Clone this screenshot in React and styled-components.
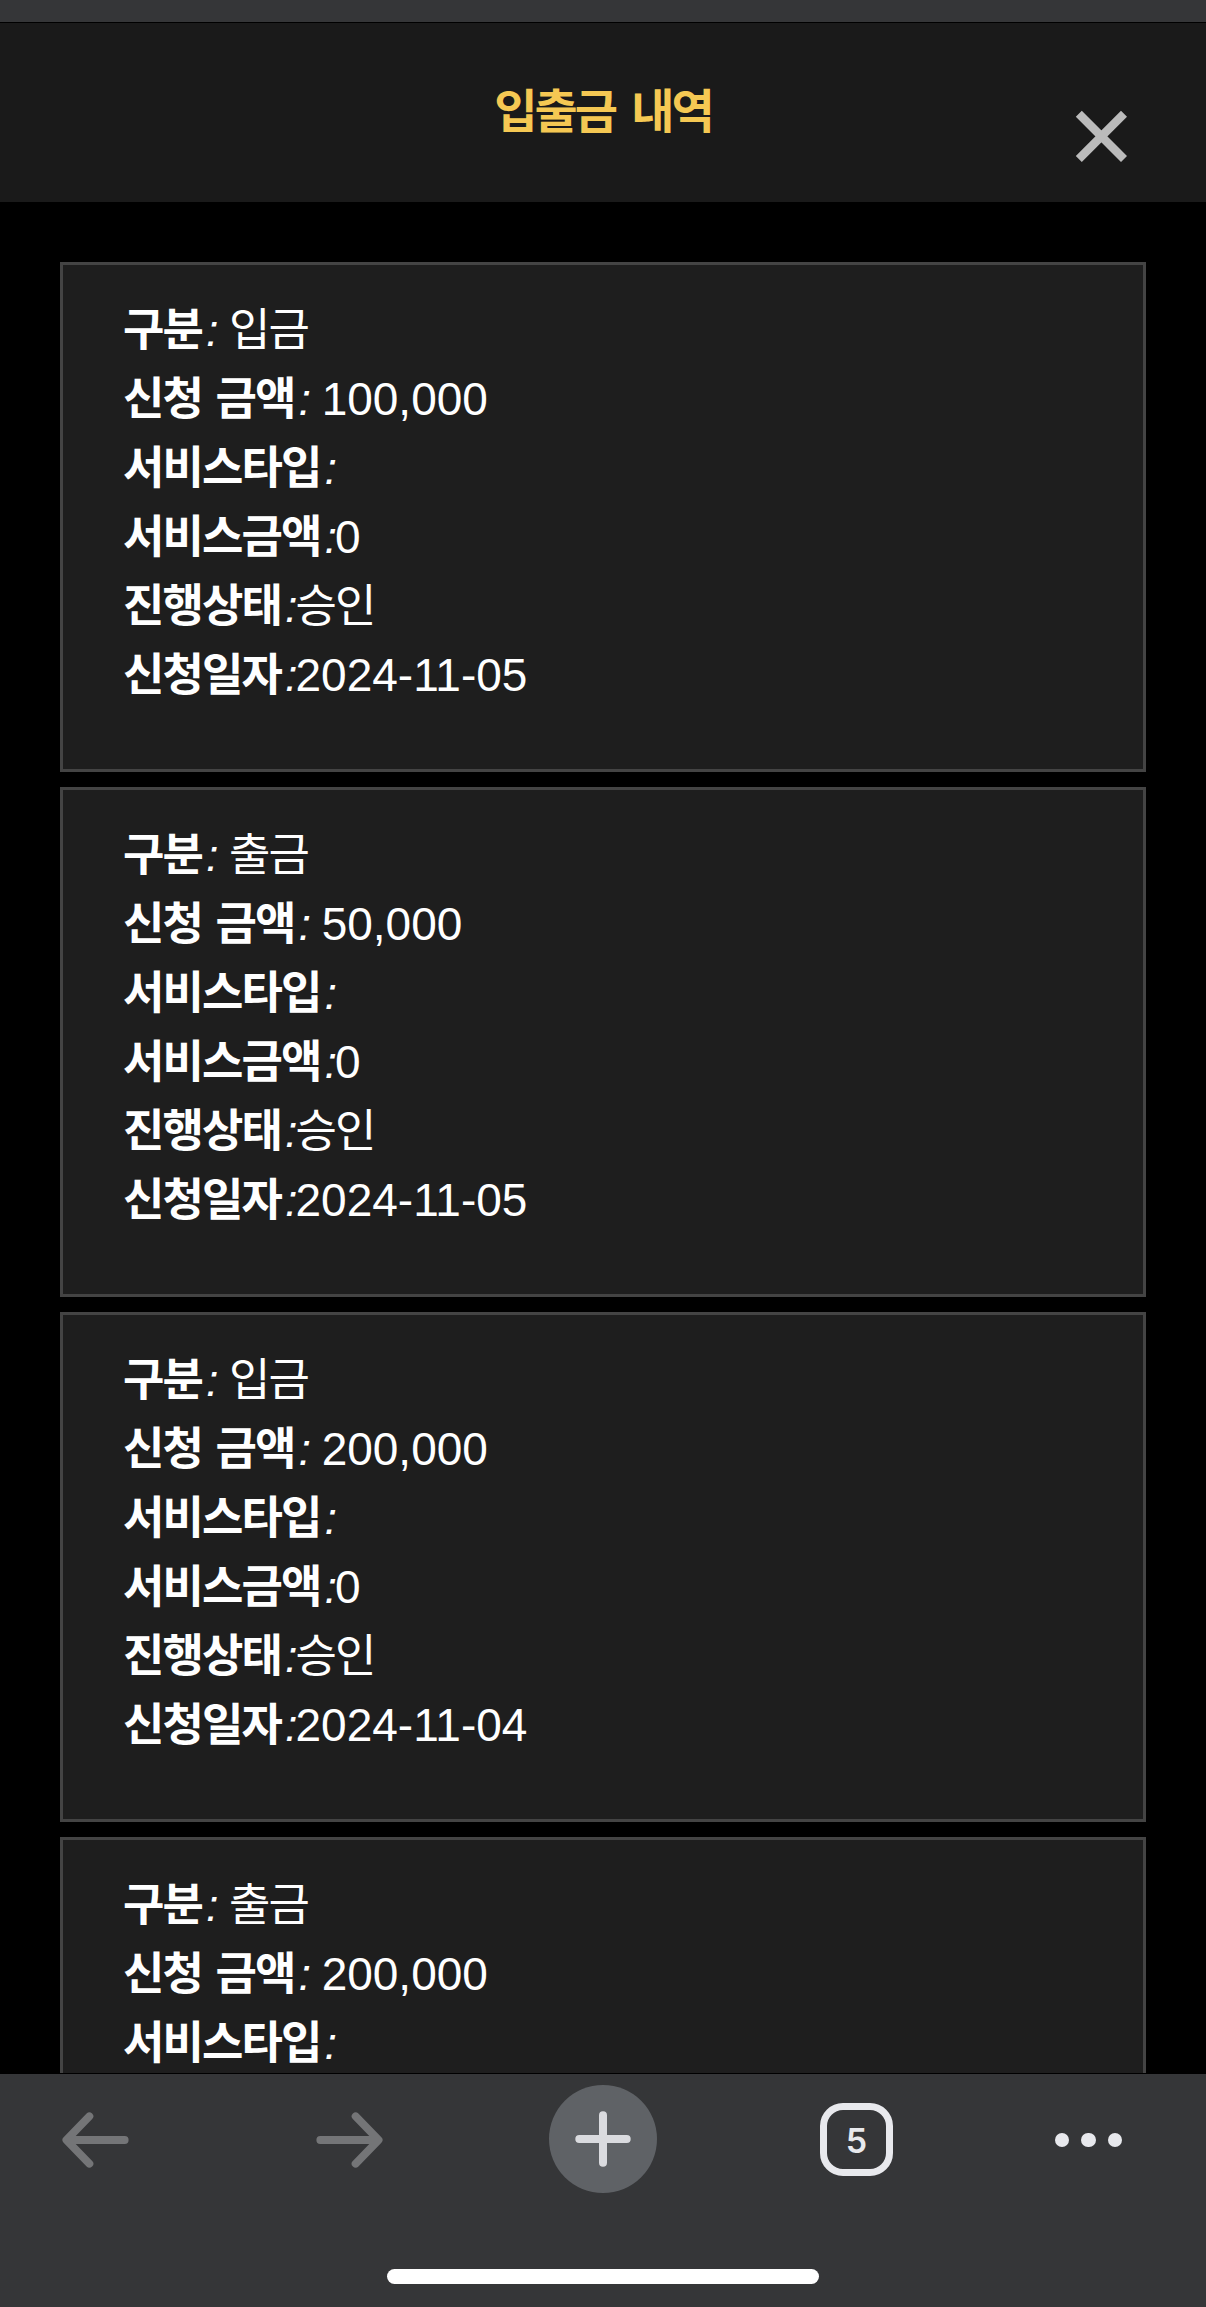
import styled, { createGlobalStyle } from "styled-components";

const records = [
  { id: 1, tipo: "입금", monto: "100,000", servicio: "0", estado: "승인", fecha: "2024-11-05" },
  { id: 2, tipo: "출금", monto: "50,000", servicio: "0", estado: "승인", fecha: "2024-11-05" },
  { id: 3, tipo: "입금", monto: "200,000", servicio: "0", estado: "승인", fecha: "2024-11-04" },
  { id: 4, tipo: "출금", monto: "200,000", servicio: "0", estado: "승인", fecha: "2024-11-04" },
];

export default function App() {
  return (
    <Screen>
      <GlobalStyle />
      <StatusStrip />
      <Header>
        <Title>입출금 내역</Title>
        <CloseBtn aria-label="닫기">
          <svg width="52" height="52" viewBox="0 0 52 52">
            <path d="M3.8 3.8 L49 49 M49 3.8 L3.8 49" stroke="#bbbbbb" strokeWidth="8.5" />
          </svg>
        </CloseBtn>
      </Header>
      <List>
        {records.map((item) => (
          <RecordCard key={item.id} item={item} />
        ))}
      </List>
      <BottomBar />
    </Screen>
  );
}

function RecordCard({ item }) {
  return (
    <Card>
      <Row>
        <Label>구분</Label><Colon>: </Colon><Value>{item.tipo}</Value>
      </Row>
      <Row>
        <Label>신청 금액</Label><Colon>: </Colon><Amount>{item.monto}</Amount>
      </Row>
      <Row>
        <Label>서비스타입</Label><Colon>:</Colon>
      </Row>
      <Row>
        <Label>서비스금액</Label><Colon>:</Colon><Amount>{item.servicio}</Amount>
      </Row>
      <Row>
        <Label>진행상태</Label><Colon>:</Colon><Value>{item.estado}</Value>
      </Row>
      <Row>
        <Label>신청일자</Label><Colon>:</Colon><Amount>{item.fecha}</Amount>
      </Row>
    </Card>
  );
}

function BottomBar() {
  return (
    <Bar>
      <Nav>
        <NavItem aria-label="back">
          <Arrow />
        </NavItem>
        <NavItem aria-label="forward">
          <Arrow $flip />
        </NavItem>
        <NavItem aria-label="new tab">
          <PlusCircle>
            <svg width="56" height="56" viewBox="0 0 56 56">
              <path d="M28 4.3 V51.7 M4.3 28 H51.7" stroke="#dadbdf" strokeWidth="8" strokeLinecap="round" />
            </svg>
          </PlusCircle>
        </NavItem>
        <NavItem aria-label="tabs">
          <TabCount>5</TabCount>
        </NavItem>
        <NavItem aria-label="menu">
          <Dots>
            <Dot />
            <Dot />
            <Dot />
          </Dots>
        </NavItem>
      </Nav>
      <HomeIndicator />
    </Bar>
  );
}

function Arrow({ $flip }) {
  return (
    <ArrowSvg $flip={$flip} width="67" height="56" viewBox="0 0 67 56" fill="none">
      <path
        d="M27.4 4.3 L4.4 28 L27.4 51.7 M5 28 H62.7"
        stroke="#747577"
        strokeWidth="7.8"
        strokeLinecap="round"
        strokeLinejoin="round"
      />
    </ArrowSvg>
  );
}

const GlobalStyle = createGlobalStyle`
  * {
    box-sizing: border-box;
  }
  body {
    margin: 0;
    background: #000;
    font-family: "Liberation Sans", "Noto Sans CJK KR", sans-serif;
  }
  button {
    border: none;
    background: none;
    padding: 0;
    font: inherit;
  }
`;
const Screen = styled.div`
  width: 1206px;
  height: 2307px;
  display: flex;
  flex-direction: column;
  background: #000;
  overflow: hidden;
`;
const StatusStrip = styled.div`
  flex: none;
  height: 23px;
  background: #353638;
  border-bottom: 1px solid #000;
`;
const Header = styled.header`
  flex: none;
  height: 179px;
  display: grid;
  grid-template-columns: 1fr auto 1fr;
  background: #1a1a1a;
`;
const Title = styled.h1`
  grid-column: 2;
  margin: 54px 0 0;
  font-size: 47px;
  line-height: 70px;
  height: 70px;
  font-weight: 700;
  letter-spacing: -3px;
  word-spacing: 6px;
  color: #f5c853;
`;
const CloseBtn = styled.button`
  width: 52px;
  height: 52px;
  justify-self: end;
  margin: 87px 79px 0 0;
  svg {
    display: block;
  }
`;
const List = styled.main`
  flex: 1;
  min-height: 0;
  padding: 60px 60px 0;
  display: flex;
  flex-direction: column;
  gap: 15px;
  overflow-y: auto;
  scrollbar-width: none;
`;
const Card = styled.div`
  flex: none;
  height: 510px;
  padding: 31px 60px 0;
  background: #1e1e1e;
  border: 3px solid #444;
`;
const Row = styled.div`
  height: 69px;
  line-height: 69px;
  font-size: 45px;
  white-space: pre;
  color: #fff;
`;
const Label = styled.b`
  font-weight: 700;
  letter-spacing: -1.9px;
  word-spacing: 3px;
`;
/* the colon sits a little off the label, close to the value */
const Colon = styled.i`
  font-style: italic;
  margin-left: 4px;
  margin-right: -2px;
`;
const Value = styled.span`
  letter-spacing: -2px;
`;
const Amount = styled.span`
  font-size: 46px;
`;
const Bar = styled.footer`
  flex: none;
  height: 234px;
  display: flex;
  flex-direction: column;
  align-items: center;
  background: #353638;
  border-top: 1px solid #000;
`;
const Nav = styled.nav`
  width: 100%;
  height: 132px;
  display: grid;
  grid-template-columns: 190px 319px 188px 319px 145px;
`;
const NavItem = styled.button`
  display: flex;
  align-items: center;
  justify-content: center;
`;
const ArrowSvg = styled.svg`
  transform: ${(p) => (p.$flip ? "scaleX(-1)" : "none")};
`;
const PlusCircle = styled.span`
  width: 108px;
  height: 108px;
  margin-top: -2px;
  border-radius: 50%;
  background: #5f6266;
  display: flex;
  align-items: center;
  justify-content: center;
`;
const TabCount = styled.span`
  width: 73px;
  height: 73px;
  margin-top: -1px;
  border: 7px solid #e8e9ed;
  border-radius: 23px;
  font-family: Inter, "Liberation Sans", sans-serif;
  font-size: 34px;
  font-weight: 600;
  line-height: 61px;
  text-align: center;
  color: #e8e9ed;
`;
const Dots = styled.span`
  display: flex;
  gap: 12px;
`;
const Dot = styled.span`
  width: 14.3px;
  height: 14.3px;
  border-radius: 50%;
  background: #e8e9ed;
`;
const HomeIndicator = styled.div`
  width: 432px;
  height: 15px;
  margin-top: 63px;
  border-radius: 8px;
  background: #fff;
`;
